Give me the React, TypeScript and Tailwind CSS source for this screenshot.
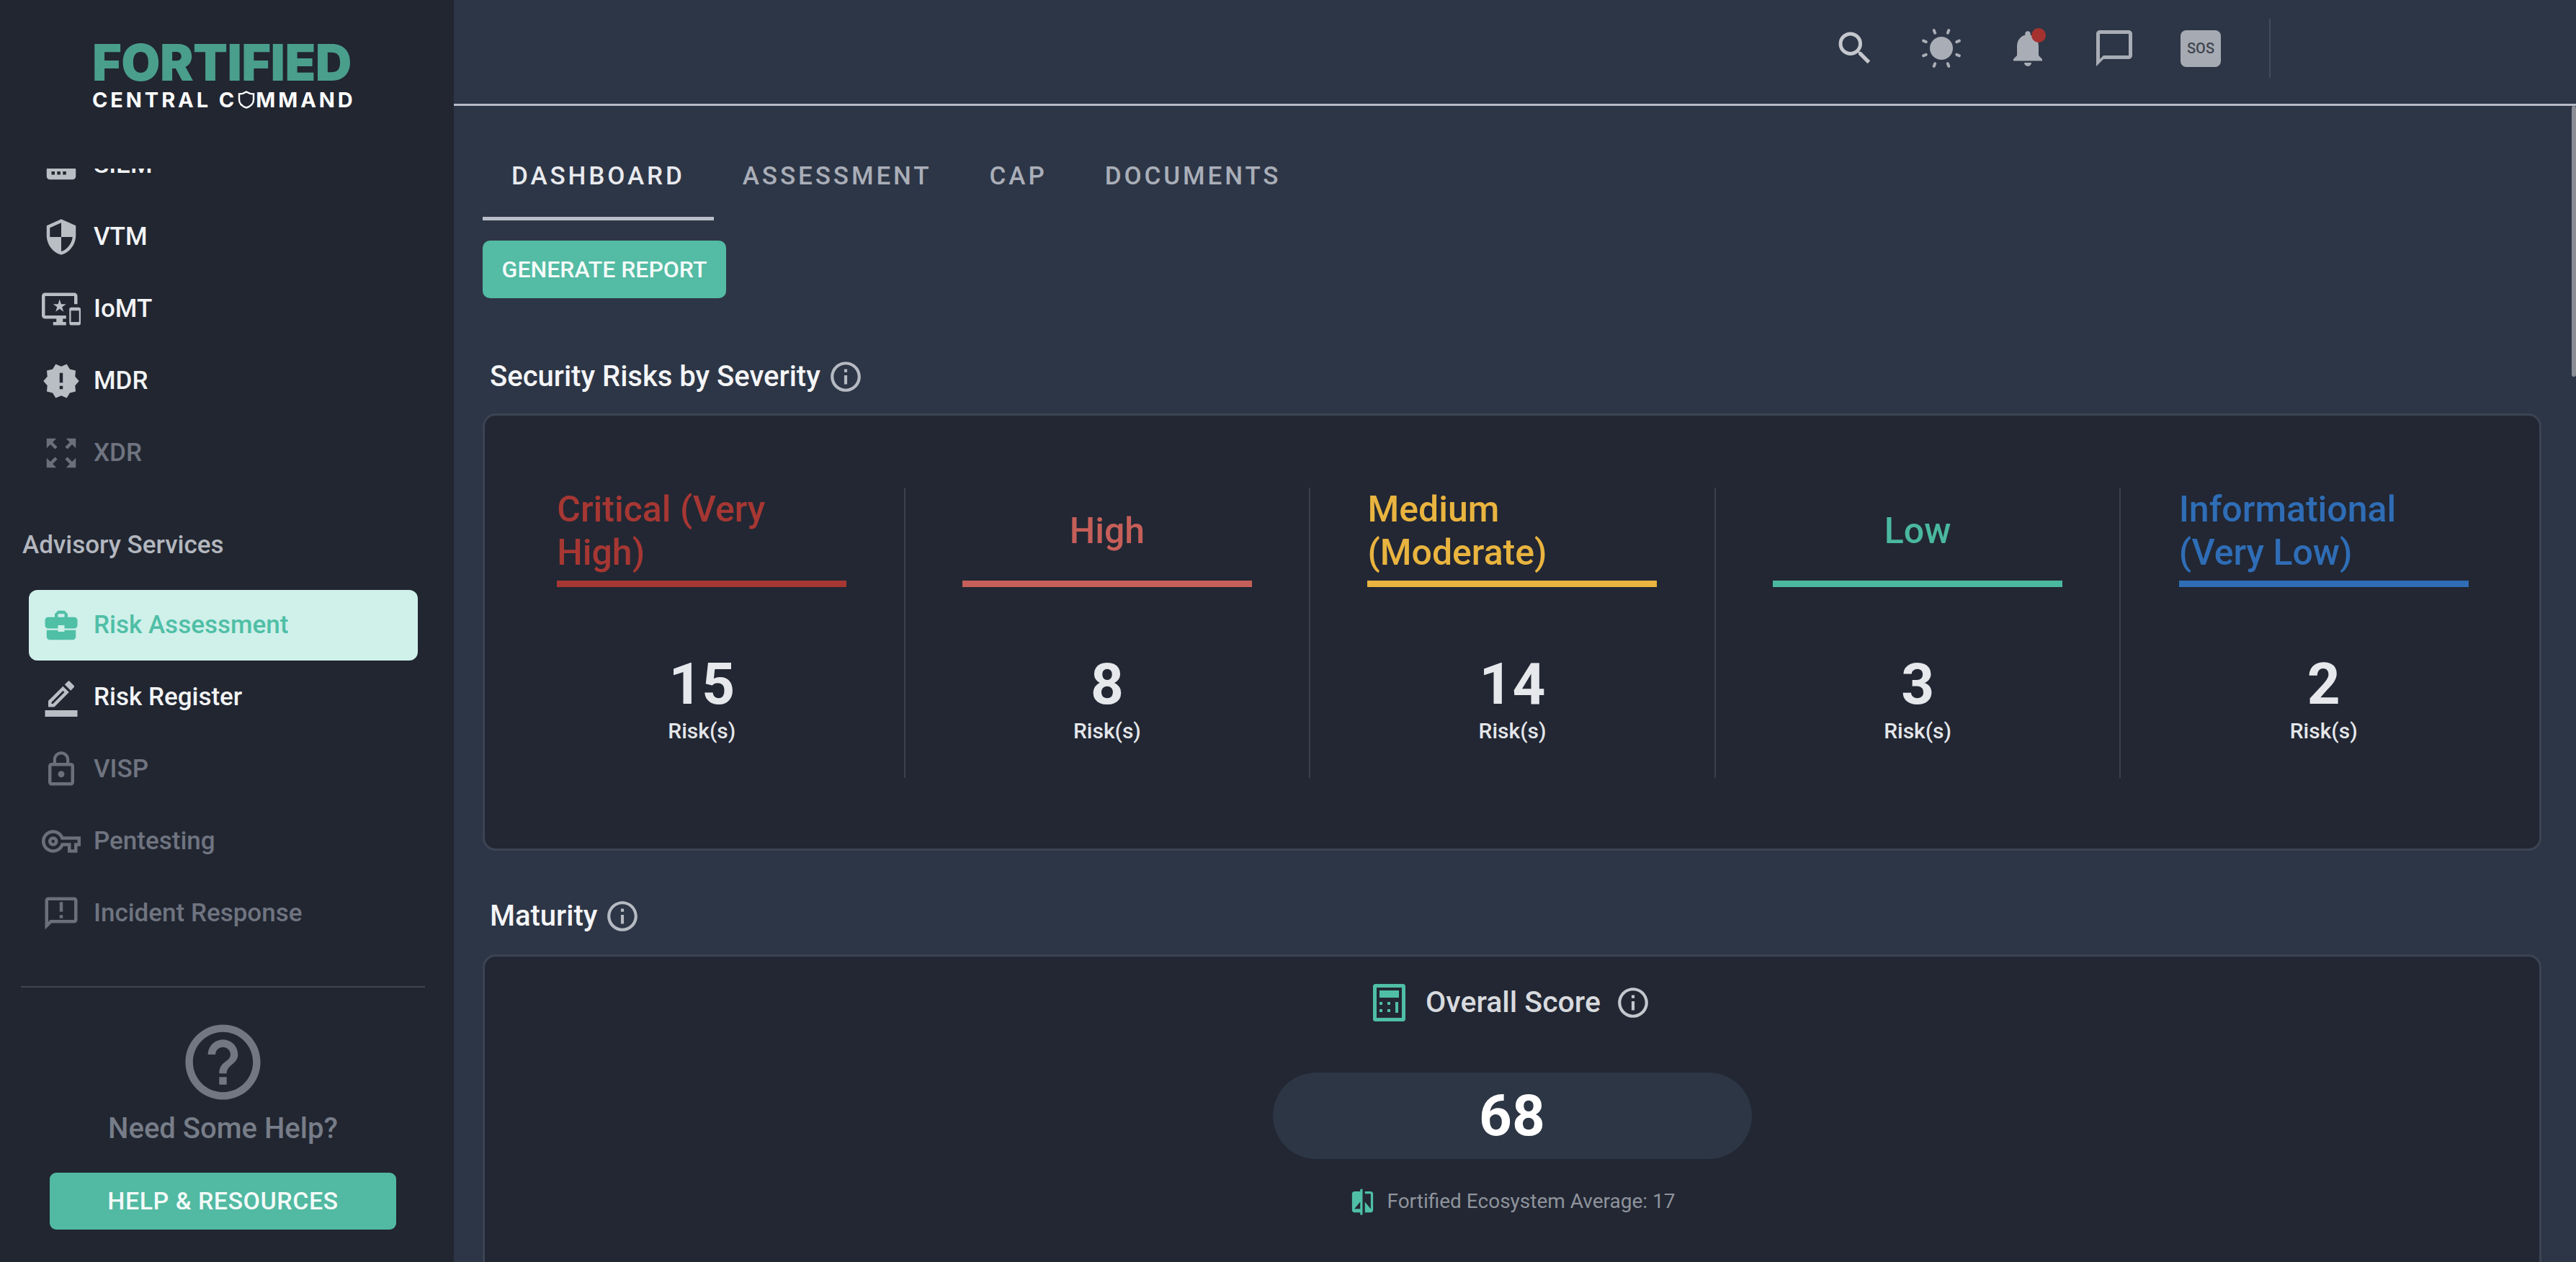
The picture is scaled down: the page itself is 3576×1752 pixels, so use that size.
import React from "react";
import {
  MdRouter,
  MdSecurity,
  MdImportantDevices,
  MdNewReleases,
  MdZoomOutMap,
  MdBusinessCenter,
  MdOutlineBorderColor,
  MdLockOutline,
  MdOutlineVpnKey,
  MdOutlineAnnouncement,
  MdHelpOutline,
  MdSearch,
  MdNotifications,
  MdChatBubbleOutline,
  MdInfoOutline,
  MdCompare,
} from "react-icons/md";
import type { IconType } from "react-icons";

interface NavItem {
  label: string;
  icon: IconType;
  state: "on" | "off" | "active";
}

const topNav: NavItem[] = [
  { label: "SIEM", icon: MdRouter, state: "on" },
  { label: "VTM", icon: MdSecurity, state: "on" },
  { label: "IoMT", icon: MdImportantDevices, state: "on" },
  { label: "MDR", icon: MdNewReleases, state: "on" },
  { label: "XDR", icon: MdZoomOutMap, state: "off" },
];

const advisoryNav: NavItem[] = [
  { label: "Risk Assessment", icon: MdBusinessCenter, state: "active" },
  { label: "Risk Register", icon: MdOutlineBorderColor, state: "on" },
  { label: "VISP", icon: MdLockOutline, state: "off" },
  { label: "Pentesting", icon: MdOutlineVpnKey, state: "off" },
  { label: "Incident Response", icon: MdOutlineAnnouncement, state: "off" },
];

const severities = [
  { title: "Critical (Very High)", count: 15, text: "text-[#a63733] text-left", bar: "bg-[#a63733]" },
  { title: "High", count: 8, text: "text-[#c65f59] text-center", bar: "bg-[#c65f59]" },
  { title: "Medium (Moderate)", count: 14, text: "text-[#e9b43f] text-left", bar: "bg-[#e9b43f]" },
  { title: "Low", count: 3, text: "text-[#4ab89f] text-center", bar: "bg-[#4ab89f]" },
  { title: "Informational (Very Low)", count: 2, text: "text-[#2f6db6] text-left", bar: "bg-[#2f6db6]" },
];

const tabs = ["DASHBOARD", "ASSESSMENT", "CAP", "DOCUMENTS"];

const NavRow: React.FC<{ item: NavItem }> = ({ item }) => {
  const Icon = item.icon;
  if (item.state === "active") {
    return (
      <div className="mb-[2px] ml-[40px] mr-[50px] flex h-[98px] items-center gap-[18px] rounded-[12px] bg-[#d0f0ea] pl-[18px] text-[#4fbfa6]">
        <Icon size={54} className="shrink-0" />
        <span>{item.label}</span>
      </div>
    );
  }
  return (
    <div
      className={
        item.state === "on"
          ? "mb-[2px] ml-[40px] mr-[50px] flex h-[98px] items-center gap-[18px] pl-[18px] text-[#f2f3f5]"
          : "mb-[2px] ml-[40px] mr-[50px] flex h-[98px] items-center gap-[18px] pl-[18px] text-[#6f7480]"
      }
    >
      <Icon size={54} className={item.state === "on" ? "shrink-0 text-[#b9bdc4]" : "shrink-0 text-[#6a6f7a]"} />
      <span>{item.label}</span>
    </div>
  );
};

const Sidebar = () => (
  <aside className="flex h-full w-[630px] shrink-0 flex-col overflow-hidden bg-[#212631]">
    <div className="h-[234px] shrink-0 pl-[128px] pt-[60px] font-[Inter,sans-serif]">
      <div className="text-[70px] font-black leading-[54px] tracking-[-0.6px] text-[#4a9e8c]">FORTIFIED</div>
      <div className="mt-[7px] whitespace-nowrap text-[29px] font-bold leading-[36px] tracking-[3.9px] text-white">
        CENTRAL C
        <span className="relative text-transparent">
          O
          <svg viewBox="0 0 24 26" className="absolute left-[1px] top-[4px] h-[27px] w-[24px]" fill="none" stroke="white" strokeWidth="2.4">
            <path d="M12 2c3 2 6 3 10 3v8c0 5-4 9-10 11C6 22 2 18 2 13V5c4 0 7-1 10-3z" />
          </svg>
        </span>
        MMAND
      </div>
    </div>

    <nav className="min-h-0 flex-1 overflow-hidden text-[35px] font-medium">
      <div className="mt-[-54px]">
        {topNav.map((item) => (
          <NavRow key={item.label} item={item} />
        ))}
        <div className="mb-[42px] mt-[59px] pl-[31px] leading-[40px] text-[#b3b7be]">Advisory Services</div>
        {advisoryNav.map((item) => (
          <NavRow key={item.label} item={item} />
        ))}
      </div>
    </nav>

    <div className="ml-[29px] flex w-[561px] shrink-0 flex-col items-center border-t-2 border-[#3f4653] pb-[45px]">
      <MdHelpOutline size={125} className="mt-[41px] text-[#727782]" />
      <div className="mt-[8px] text-[40px] font-medium leading-[44px] text-[#777d88]">Need Some Help?</div>
      <button className="mt-[39px] h-[79px] w-[481px] rounded-[9px] bg-[#52b9a2] text-[34px] font-medium tracking-[0.5px] text-[#f4fbf9]">
        HELP &amp; RESOURCES
      </button>
    </div>
  </aside>
);

const SunIcon = () => (
  <svg viewBox="0 0 60 60" className="h-[60px] w-[60px]" fill="#a9adb5" stroke="#a9adb5" strokeLinecap="round">
    <circle cx="30" cy="30" r="16" stroke="none" />
    {[22.5, 67.5, 112.5, 157.5, 202.5, 247.5, 292.5, 337.5].map((deg) => (
      <line key={deg} x1="30" y1="7" x2="30" y2="3" strokeWidth="4" transform={`rotate(${deg} 30 30)`} />
    ))}
  </svg>
);

const Header = () => (
  <header className="flex h-[147px] shrink-0 items-center justify-end border-b-[3px] border-[#b7bcc6] pb-[10px] pr-[424px] text-[#a9adb5]">
    <div className="flex w-[120px] justify-center text-[#c4c7cd]">
      <MdSearch size={60} />
    </div>
    <div className="flex w-[120px] justify-center">
      <SunIcon />
    </div>
    <div className="flex w-[120px] justify-center">
      <div className="relative">
        <MdNotifications size={60} />
        <span className="absolute right-[5px] top-[2px] h-[20px] w-[20px] rounded-full bg-[#a5322f]" />
      </div>
    </div>
    <div className="flex w-[120px] justify-center">
      <MdChatBubbleOutline size={60} />
    </div>
    <div className="flex w-[120px] justify-center">
      <div className="flex h-[51px] w-[56px] items-center justify-center rounded-[8px] bg-[#a6aab2] text-[20px] font-medium text-[#3f4550]">
        SOS
      </div>
    </div>
    <div className="ml-[35px] h-[82px] w-[2px] bg-[#434c5c]" />
  </header>
);

const SectionTitle: React.FC<{ title: string; className: string }> = ({ title, className }) => (
  <div className={`flex h-[48px] items-center gap-[10px] pl-[10px] text-[40px] font-medium text-[#f4f5f7] ${className}`}>
    {title}
    <MdInfoOutline size={50} className="text-[#b6bac2]" />
  </div>
);

const CalculatorIcon = () => (
  <svg viewBox="0 0 45 52" className="h-[52px] w-[45px]" fill="#4fbfa6">
    <rect x="2.5" y="2.5" width="40" height="47" fill="none" stroke="#4fbfa6" strokeWidth="5" rx="1" />
    <rect x="9" y="9" width="27" height="10" />
    <rect x="9" y="25" width="4" height="4" />
    <rect x="20" y="25" width="4" height="4" />
    <rect x="9" y="35" width="4" height="4" />
    <rect x="20" y="35" width="4" height="4" />
    <rect x="31" y="25" width="4" height="15" />
  </svg>
);

const SeverityCard = () => (
  <div className="mt-[27px] grid h-[607px] grid-cols-5 rounded-[18px] border-[3px] border-[#3c4453] bg-[#222733] pl-[21px] pr-[18px] pt-[100px]">
    {severities.map((s, i) => (
      <div key={s.title} className={i < 4 ? "h-[403px] border-r-2 border-[#3a404c]" : "h-[403px]"}>
        <div className="mx-auto w-[402px]">
          <div className="flex h-[120px] items-center">
            <div className={`w-full text-[50px] font-medium leading-[60px] ${s.text}`}>{s.title}</div>
          </div>
          <div className={`mt-[9px] h-[9px] ${s.bar}`} />
          <div className="mt-[95px] text-center text-[80px] font-bold leading-[80px] text-[#e6e8ec]">{s.count}</div>
          <div className="mt-[8px] text-center text-[30px] font-medium leading-[34px] text-[#e4e6ea]">Risk(s)</div>
        </div>
      </div>
    ))}
  </div>
);

const MaturityCard = () => (
  <div className="mt-[29px] flex h-[600px] flex-col items-center rounded-t-[18px] border-[3px] border-[#3c4453] bg-[#222733] pt-[38px]">
    <div className="flex h-[52px] items-center text-[41px] font-medium text-[#d8dade]">
      <CalculatorIcon />
      <span className="ml-[28px]">Overall Score</span>
      <MdInfoOutline size={50} className="ml-[20px] text-[#c4c7cd]" />
    </div>
    <div className="mt-[71px] flex h-[120px] w-[665px] items-center justify-center rounded-full bg-[#2c3644] text-[80px] font-bold text-white">
      68
    </div>
    <div className="mt-[39px] flex h-[40px] items-center text-[28px] text-[#8f939c]">
      <MdCompare size={39} className="mr-[14px] text-[#4fbfa6]" />
      Fortified Ecosystem Average: 17
    </div>
  </div>
);

export default function App() {
  return (
    <div className="flex h-screen w-full overflow-hidden bg-[#2d3646] font-[Roboto,sans-serif]">
      <Sidebar />
      <main className="flex min-w-0 flex-1 flex-col">
        <Header />
        <div className="flex min-h-0 flex-1">
          <div className="min-w-0 flex-1 overflow-hidden pl-[40px] pr-[42px] pt-[36px]">
            <div className="flex text-[35px] font-medium tracking-[3.9px]">
              {tabs.map((tab, i) => (
                <div
                  key={tab}
                  className={
                    i === 0
                      ? "flex h-[123px] items-center border-b-[5px] border-[#b9bec8] px-[40px] pt-[7px] text-[#e8eaee]"
                      : "flex h-[123px] items-center border-b-[5px] border-transparent px-[40px] pt-[7px] text-[#a9aeb8]"
                  }
                >
                  {tab}
                </div>
              ))}
            </div>
            <button className="mt-[28px] flex h-[80px] w-[338px] items-center justify-center rounded-[10px] bg-[#54bba4] text-[32px] font-medium text-[#f4fbf9]">
              GENERATE REPORT
            </button>
            <SectionTitle title="Security Risks by Severity" className="mt-[85px]" />
            <SeverityCard />
            <SectionTitle title="Maturity" className="mt-[67px]" />
            <MaturityCard />
          </div>
          <div className="w-[6px] shrink-0">
            <div className="h-[376px] rounded-[4px] bg-[#8a8e94]" />
          </div>
        </div>
      </main>
    </div>
  );
}
